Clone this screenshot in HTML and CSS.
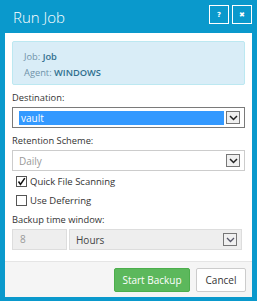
FILE: index.html
```html
<!DOCTYPE html>
<html lang="en">
<head>
    <meta charset="UTF-8" />
    <title>Run Job</title>
    <link rel="stylesheet" href="styles.css">
</head>
<body>
    <div class="dialog">
        <div class="titlebar">
            <span class="title">Run Job</span>
            <div class="title-buttons">
                <button class="tb-btn">?</button>
                <button class="tb-btn">&#x2716;</button>
            </div>
        </div>
        <div class="content">
            <div class="info">
                <div><span class="info-label">Job:</span> <b>Job</b></div>
                <div><span class="info-label">Agent:</span> <b>WINDOWS</b></div>
            </div>

            <label class="field-label">Destination:</label>
            <div class="select focused">
                <span class="selected-value">vault</span>
                <span class="arrow">
                    <svg width="9" height="6" viewBox="0 0 9 6"><path d="M1 1 L4.5 4.5 L8 1" fill="none" stroke="#222" stroke-width="1.5"/></svg>
                </span>
            </div>

            <label class="field-label">Retention Scheme:</label>
            <div class="select disabled">
                <span class="value">Daily</span>
                <span class="arrow">
                    <svg width="9" height="6" viewBox="0 0 9 6"><path d="M1 1 L4.5 4.5 L8 1" fill="none" stroke="#222" stroke-width="1.5"/></svg>
                </span>
            </div>

            <div class="check">
                <span class="box">
                    <svg width="9" height="9" viewBox="0 0 9 9"><path d="M1.5 4.5 L3.5 7.5 L7.8 1.2" fill="none" stroke="#111" stroke-width="1.5"/></svg>
                </span>
                Quick File Scanning
            </div>
            <div class="check">
                <span class="box"></span>
                Use Deferring
            </div>

            <label class="field-label">Backup time window:</label>
            <div class="time-row">
                <div class="num-input">8</div>
                <div class="select grey">
                    <span class="value dark">Hours</span>
                    <span class="arrow">
                        <svg width="9" height="6" viewBox="0 0 9 6"><path d="M1 1 L4.5 4.5 L8 1" fill="none" stroke="#556" stroke-width="1.3"/></svg>
                    </span>
                </div>
            </div>
        </div>
        <div class="footer">
            <button class="btn btn-success">Start Backup</button>
            <button class="btn btn-default">Cancel</button>
        </div>
    </div>
</body>
</html>
```

FILE: styles.css
```css
body {
    margin: 0;
    background: #0a99cc;
    font-family: 'Open Sans', sans-serif;
    font-size: 9.3px;
    color: #333;
}

.dialog {
    width: 257px;
    height: 301px;
    padding: 0 5px 4px 5px;
    box-sizing: border-box;
    display: flex;
    flex-direction: column;
}

.titlebar {
    height: 33px;
    display: flex;
    align-items: center;
    justify-content: space-between;
    padding-left: 8px;
}

.title {
    color: #fff;
    font-size: 15px;
    font-weight: 300;
    margin-top: 1px;
}

.title-buttons {
    display: flex;
    gap: 3px;
    margin-top: -4px;
}

.tb-btn {
    width: 20px;
    height: 19px;
    border: 1px solid #fff;
    background: transparent;
    color: #fff;
    font-size: 7px;
    font-weight: bold;
    padding: 0;
    font-family: 'DejaVu Sans', sans-serif;
}

.content {
    background: #fff;
    padding: 8px 7px 11px 7px;
}

.info {
    background: #d9edf7;
    border: 1px solid #bce8f1;
    border-radius: 2px;
    color: #31708f;
    padding: 7px 11px 5px 11px;
    line-height: 16px;
    height: 30px;
}

.info-label {
    color: #6f93aa;
}

.info b {
    font-weight: 600;
}

.field-label {
    display: block;
    margin-top: 5px;
    line-height: 16px;
    height: 17px;
}

.select {
    height: 21px;
    box-sizing: border-box;
    border: 1px solid #ccc;
    display: flex;
    align-items: center;
    padding: 0 4px 0 6px;
    background: #fff;
}

.select.focused {
    border: 1px solid #7a7a7a;
}

.selected-value {
    flex: 1;
    background: #3399ff;
    color: #fff;
    font-size: 10px;
    line-height: 14px;
    padding-left: 2px;
    margin-right: 2px;
}

.value {
    flex: 1;
    color: #999;
    font-size: 10px;
}

.value.dark {
    color: #444;
}

.arrow {
    width: 12px;
    height: 11px;
    border: 1px solid #777;
    background: #f0f0f0;
    display: flex;
    align-items: center;
    justify-content: center;
}

.select.grey {
    flex: 1;
    background: #eee;
    border-color: #ddd;
}

.check {
    display: flex;
    align-items: center;
    gap: 3px;
    margin-top: 4px;
    padding-left: 4px;
    height: 13px;
    font-size: 9.5px;
}

.check + .check {
    margin-top: 6px;
}

.box {
    width: 9px;
    height: 9px;
    border: 1px solid #555;
    display: flex;
    align-items: center;
    justify-content: center;
}

.time-row {
    display: flex;
    gap: 2px;
    margin-right: 3px;
}

.num-input {
    width: 55px;
    height: 21px;
    box-sizing: border-box;
    border: 1px solid #ddd;
    background: #eee;
    color: #999;
    font-size: 10px;
    padding-left: 7px;
    line-height: 19px;
}

.footer {
    flex: 1;
    background: #f5f5f5;
    border-top: 1px solid #e5e5e5;
    display: flex;
    justify-content: flex-end;
    align-items: center;
    gap: 6px;
    padding-right: 6px;
}

.btn {
    height: 24px;
    border-radius: 2px;
    font-family: 'Open Sans', sans-serif;
    font-size: 10px;
    padding: 0;
    white-space: nowrap;
}

.btn-success {
    background: #5cb85c;
    border: 1px solid #4cae4c;
    color: #fff;
    width: 76px;
}

.btn-default {
    background: #fff;
    border: 1px solid #ccc;
    color: #333;
    width: 50px;
}
```
